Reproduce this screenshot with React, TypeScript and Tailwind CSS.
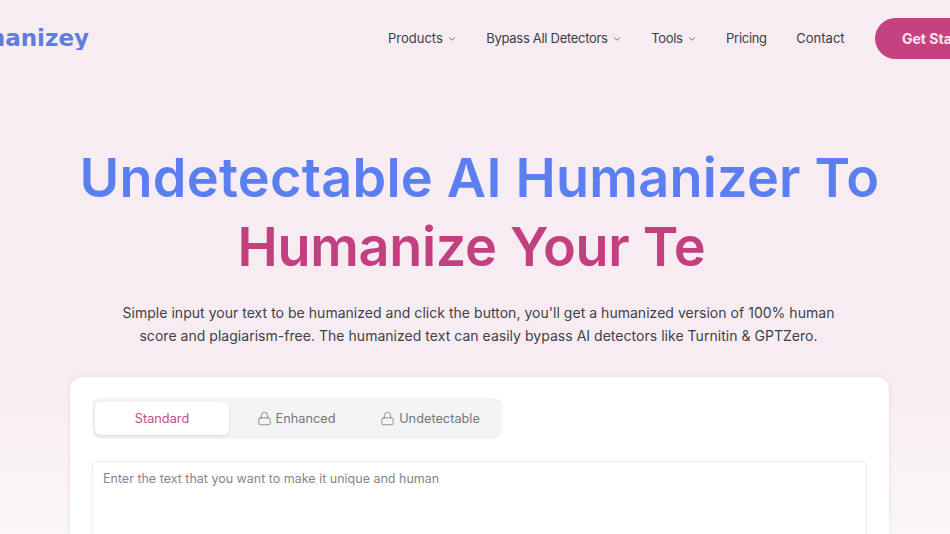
import { ChevronDown, Lock } from "lucide-react";

function NavItem({ label, menu, tight }: { label: string; menu?: boolean; tight?: boolean }) {
  return (
    <a className={`flex shrink-0 items-center gap-[4px] whitespace-nowrap text-[13px] leading-5 text-[#3d3d4a] ${tight ? "tracking-[-0.3px]" : ""}`}>
      {label}
      {menu && <ChevronDown size={10} strokeWidth={2} className="mt-[2px] text-[#555]" />}
    </a>
  );
}

function Tab({ label }: { label: string }) {
  return (
    <div className="flex flex-1 items-center justify-center gap-[4px] text-[12.75px] text-[#75757f]">
      <Lock size={15} strokeWidth={1.25} />
      {label}
    </div>
  );
}

export default function App() {
  return (
    <div className="h-[534px] w-[950px] overflow-hidden bg-gradient-to-b from-[#f7ecf2] from-[68%] to-[#fbf6f9] font-['Inter',sans-serif]">
      <div className="w-[959px]">
        <header className="flex h-[77px] w-[1010px] items-center">
          <div className="flex w-[89px] shrink-0 justify-end overflow-hidden">
            <span className="whitespace-nowrap font-['DejaVu_Sans',sans-serif] text-[23px] font-bold leading-none text-[#5f7ce0]">
              Humanizey
            </span>
          </div>
          <nav className="mb-[2px] ml-[299px] flex w-[457px] shrink-0 items-center gap-[29.5px]">
            <NavItem label="Products" menu />
            <NavItem label="Bypass All Detectors" menu tight />
            <NavItem label="Tools" menu tight />
            <NavItem label="Pricing" tight />
            <NavItem label="Contact" />
          </nav>
          <div className="ml-[30px] flex h-[41px] w-[130px] shrink-0 items-center whitespace-nowrap rounded-full bg-[#c6417f] pl-[27px] text-[14px] font-bold text-[#f9e6ef]">
            Get Started
          </div>
        </header>

        <main className="flex flex-col items-center">
          <h1 className="mt-[66px] text-center text-[54px] font-semibold leading-[69px]">
            <span className="block whitespace-nowrap tracking-[0.25px] text-[#5b7ff0]">Undetectable AI Humanizer To</span>
            <span className="block whitespace-nowrap pr-[16px] tracking-[-0.3px] text-[#c2407f]">Humanize Your Te</span>
          </h1>
          <p className="mt-[20px] w-[760px] pr-[2px] text-center text-[14px] leading-[23px] tracking-[0.03px] text-[#3f3f4a]">
            Simple input your text to be humanized and click the button, you'll get a humanized version of 100% human
            <br />
            score and plagiarism-free. The humanized text can easily bypass AI detectors like Turnitin &amp; GPTZero.
          </p>
          <section className="mt-[30px] h-[300px] w-[819px] rounded-xl bg-white px-[22px] pt-[21px] shadow-[0_0_4px_rgba(120,80,100,0.15)]">
            <div className="flex h-[41px] w-[410px] rounded-lg bg-[#f3f4f6] py-[3px] pl-[3px] pr-[5px]">
              <div className="mt-[1px] flex h-[33px] w-[134px] items-center justify-center rounded-md bg-white text-[12.75px] text-[#c2508a] shadow-[0_1px_3px_rgba(0,0,0,0.12)]">
                Standard
              </div>
              <Tab label="Enhanced" />
              <Tab label="Undetectable" />
            </div>
            <div className="mt-[22px] h-[200px] w-[775px] rounded border border-[#eeeeee] px-[10px] py-[7px] text-[12.5px] leading-5 text-[#85858d]">
              Enter the text that you want to make it unique and human
            </div>
          </section>
        </main>
      </div>
    </div>
  );
}
